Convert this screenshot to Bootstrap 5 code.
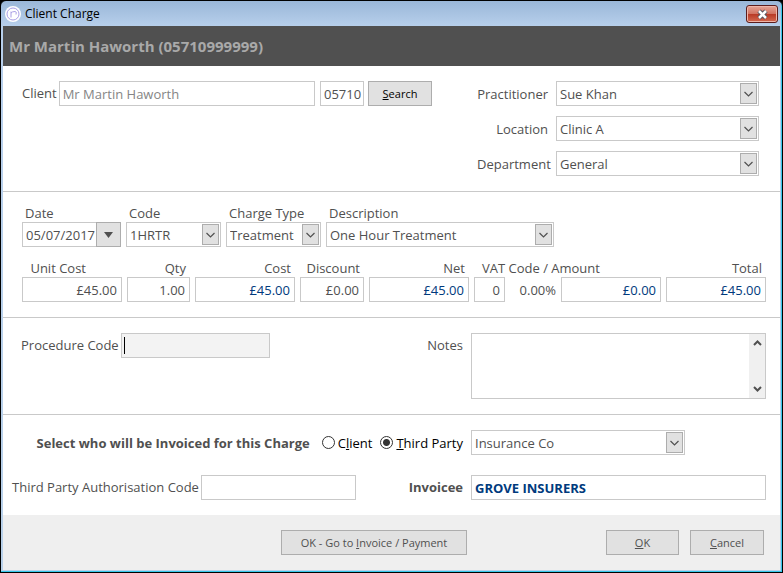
<!DOCTYPE html>
<html lang="en">
<head>
<meta charset="utf-8">
<meta name="viewport" content="width=device-width, initial-scale=1">
<title>Client Charge</title>
<link href="https://cdn.jsdelivr.net/npm/bootstrap@5.3.0/dist/css/bootstrap.min.css" rel="stylesheet">
<style>
  body { font-family: "Open Sans", "Noto Sans", sans-serif; font-size: 13px; line-height: 18px; color: #505050; background: #000; }
  .win { min-height: 100vh; border: 1px solid #000; border-radius: 6px 6px 0 0; background: linear-gradient(#9ab7d8, #b8d0ec 26px, #b9d1ea); padding: 1px; box-shadow: inset -1px -1px 0 #37c7ea; }
  .win-inner { background: #fff; margin: 0 1px 1px; }
  .titlebar { height: 24px; color: #000; font-size: 12px; padding: 0 3px 0 2px; }
  .title-icon { margin-right: 3px; }
  .close-btn { width: 32px; height: 18px; border: 1px solid #5c1d1c; border-radius: 3px; background: linear-gradient(#e5a596, #d27361 48%, #b93a26 52%, #d4694f); box-shadow: inset 0 0 0 1px #efb5a8; }
  .client-bar { background: #505050; color: #a9a9a9; font-size: 15px; line-height: 20px; padding: 10px 6px; }
  .sect { border-bottom: 1px solid #c9c9c9; }
  .s-client { padding: 15px 21px 15px 19px; }
  .s-charge { padding: 12px 14px 15px 19px; }
  .s-notes { padding: 15px 14px 15px 18px; }
  .s-invoice { padding: 15px 14px 15px 9px; row-gap: 20px; }
  .fld { display: block; width: 100%; min-width: 0; height: 25px; padding: 0 3px; border: 1px solid #c9c9c9; border-radius: 0; background-color: #fff; color: #505050; font: inherit; outline: 0; }
  select.fld { appearance: none; padding: 0 22px 0 3px; background-repeat: no-repeat; background-position: right 1px center; background-image: url("data:image/svg+xml,%3Csvg xmlns='http://www.w3.org/2000/svg' width='17' height='21'%3E%3Crect x='.5' y='.5' width='16' height='20' fill='%23e1e1e1' stroke='%23adadad'/%3E%3Cpath d='M4.5 9l4 4 4-4' fill='none' stroke='%23505050' stroke-width='1.2'/%3E%3C/svg%3E"); }
  .btn-win { height: 25px; padding: 0 4px; border: 1px solid #adadad; border-radius: 0; background: #e1e1e1; color: #505050; font-size: 11px; line-height: 24px; }
  .client-grid { display: grid; grid-template-columns: 455fr 282fr; }
  .who-grid { display: grid; grid-template-columns: 71px minmax(0, 1fr); column-gap: 8px; row-gap: 10px; align-items: center; text-align: right; }
  .client-no { width: 44px; margin-left: 5px; padding: 0 1px 0 3px; }
  .client-name { color: #858585; }
  .search-btn { width: 64px; margin-right: 45px; color: #000; }
  .half-grid { display: grid; grid-template-columns: 459fr 295fr; align-items: start; }
  .s-notes .half-grid { grid-template-columns: 450fr 295fr; }
  .pick-grid { display: grid; grid-template-columns: 99fr 95fr 95fr 228fr 207fr; column-gap: 5px; }
  .sum-grid { display: grid; grid-template-columns: 100fr 63fr 100fr 64fr 100fr 31fr 46fr 100fr 100fr; column-gap: 5px; text-align: right; align-items: center; }
  .sum-grid .fld { text-align: right; padding-right: 4px; }
  .sum-grid label { padding-right: 4px; }
  .sum-grid label.unit { padding-right: 36px; }
  .sum-grid label.vat { grid-column: span 3; text-align: left; padding-left: 8px; }
  .calc { color: #003a7d !important; }
  .date-btn { width: 25px; height: 25px; border: 1px solid #adadad; background: #e1e1e1; flex: none; }
  .pick-grid label { padding-left: 3px; display: block; }
  .proc { width: 149px; background: linear-gradient(#000, #000) 2px 3px / 1px 17px no-repeat #f3f3f3; }
  .auth { width: 155px; }
  .row-lab { line-height: 25px; }
  .snug { padding-right: 2px; }
  .notes-box { border: 1px solid #c9c9c9; height: 66px; }
  .notes-box textarea { border: 0; resize: none; outline: 0; color: inherit; }
  .scroller { width: 16px; background: #f0f0f0; padding: 3px 0; }
  .scroller button { border: 0; background: none; padding: 0; height: 12px; line-height: 0; }
  .pay-type { appearance: none; width: 13px; height: 13px; margin: 0 3px 0 0; border: 1px solid #333; border-radius: 50%; background: #fff; }
  .pay-type:checked { background: radial-gradient(circle, #333 3px, #fff 4px); }
  .radio-lab { color: #000; }
  .foot { background: #efefef; padding: 15px 16px 15px 0; display: grid; grid-template-columns: 278fr 186fr 139fr 73fr 11fr 74fr; }
  .third-party { width: 214px; }
</style>
</head>
<body>
<main class="win d-flex flex-column">
  <header class="titlebar d-flex align-items-center">
    <svg width="18" height="18" viewBox="0 0 18 18" class="title-icon" aria-hidden="true"><circle cx="9" cy="9" r="8" fill="#fff"/><circle cx="9" cy="9" r="6" fill="none" stroke="#aaa0e6"/><path d="M7 12.500V6.500M7 8q1-1.500 4-1.500q2 0 1 3" fill="none" stroke="#aaa0e6"/></svg>
    <span class="flex-grow-1">Client Charge</span>
    <button type="button" class="close-btn p-0 d-flex align-items-center justify-content-center" aria-label="Close"><svg width="13" height="11" viewBox="0 0 13 11"><path d="M3 2l7 7M10 2l-7 7" stroke="#55535e" stroke-width="4.500"/><path d="M3 2l7 7M10 2l-7 7" stroke="#fff" stroke-width="2.500"/></svg></button>
  </header>
  <form class="win-inner flex-grow-1 d-flex flex-column">
    <h1 class="client-bar fw-bold m-0">Mr Martin Haworth (05710999999)</h1>

    <section class="sect s-client">
      <div class="client-grid">
        <div class="d-flex align-items-start">
          <label for="client" class="row-lab snug">Client</label>
          <input id="client" class="fld client-name flex-grow-1" value="Mr Martin Haworth">
          <input class="fld client-no flex-shrink-0" value="05710" aria-label="Client number">
          <button type="button" class="btn btn-win search-btn ms-1 flex-shrink-0"><u>S</u>earch</button>
        </div>
        <div class="who-grid">
          <label for="prac">Practitioner</label><select id="prac" class="fld"><option>Sue Khan</option></select>
          <label for="loc">Location</label><select id="loc" class="fld"><option>Clinic A</option></select>
          <label for="dept">Department</label><select id="dept" class="fld"><option>General</option></select>
        </div>
      </div>
    </section>

    <section class="sect s-charge">
      <div class="pick-grid">
        <div><label for="date">Date</label>
          <div class="d-flex"><input id="date" class="fld border-end-0 pe-0" value="05/07/2017"><button type="button" class="date-btn p-0 d-flex align-items-center justify-content-center" aria-label="Pick date"><svg width="9" height="6"><path d="M0 0h9L4.500 6z" fill="#505050"/></svg></button></div></div>
        <div><label for="code">Code</label><select id="code" class="fld"><option>1HRTR</option></select></div>
        <div><label for="ctype">Charge Type</label><select id="ctype" class="fld"><option>Treatment</option></select></div>
        <div><label for="descr">Description</label><select id="descr" class="fld"><option>One Hour Treatment</option></select></div>
      </div>
      <div class="sum-grid mt-2 pt-1">
        <label for="unit" class="unit">Unit Cost</label><label for="qty">Qty</label><label for="cost">Cost</label><label for="disc">Discount</label><label for="net">Net</label><label for="vat" class="vat">VAT Code / Amount</label><label for="total">Total</label>
        <input id="unit" class="fld" value="£45.00">
        <input id="qty" class="fld" value="1.00">
        <input id="cost" class="fld calc" value="£45.00">
        <input id="disc" class="fld" value="£0.00">
        <input id="net" class="fld calc" value="£45.00">
        <input id="vat" class="fld" value="0">
        <span>0.00%</span>
        <input class="fld calc" value="£0.00" aria-label="VAT amount">
        <input id="total" class="fld calc" value="£45.00">
      </div>
    </section>

    <section class="sect s-notes">
      <div class="half-grid">
        <div class="d-flex">
          <label for="proc" class="row-lab snug">Procedure Code</label>
          <input id="proc" class="fld proc">
          <label for="notes" class="row-lab ms-auto pe-2">Notes</label>
        </div>
        <div class="notes-box d-flex">
          <textarea id="notes" class="flex-grow-1"></textarea>
          <div class="scroller d-flex flex-column justify-content-between align-items-center">
            <button type="button" aria-label="Scroll up"><svg width="9" height="12"><path d="M1 8l3.500-3.500L8 8" fill="none" stroke="#505050" stroke-width="2"/></svg></button>
            <button type="button" aria-label="Scroll down"><svg width="9" height="12"><path d="M1 4l3.500 3.500L8 4" fill="none" stroke="#505050" stroke-width="2"/></svg></button>
          </div>
        </div>
      </div>
    </section>

    <section class="s-invoice d-flex flex-column">
      <div class="half-grid align-items-center">
        <div class="d-flex align-items-center justify-content-end pe-2">
          <span class="fw-bold me-2 pe-1">Select who will be Invoiced for this Charge</span>
          <input type="radio" class="pay-type" name="payer" id="p1"><label for="p1" class="radio-lab me-2">C<u>l</u>ient</label>
          <input type="radio" class="pay-type" name="payer" id="p2" checked><label for="p2" class="radio-lab"><u>T</u>hird Party</label>
        </div>
        <select class="fld third-party" aria-label="Third party"><option>Insurance Co</option></select>
      </div>
      <div class="half-grid">
        <div class="d-flex">
          <label for="auth" class="row-lab snug">Third Party Authorisation Code</label>
          <input id="auth" class="fld auth">
          <label for="inv" class="row-lab fw-bold ms-auto pe-2">Invoicee</label>
        </div>
        <input id="inv" class="fld calc fw-bold" value="GROVE INSURERS">
      </div>
    </section>

    <footer class="foot flex-grow-1 align-items-start">
      <span></span>
      <button type="button" class="btn btn-win">OK - Go to <u>I</u>nvoice / Payment</button>
      <span></span>
      <button type="button" class="btn btn-win"><u>O</u>K</button>
      <span></span>
      <button type="button" class="btn btn-win"><u>C</u>ancel</button>
    </footer>
  </form>
</main>
<script src="https://cdn.jsdelivr.net/npm/bootstrap@5.3.0/dist/js/bootstrap.bundle.min.js"></script>
</body>
</html>
